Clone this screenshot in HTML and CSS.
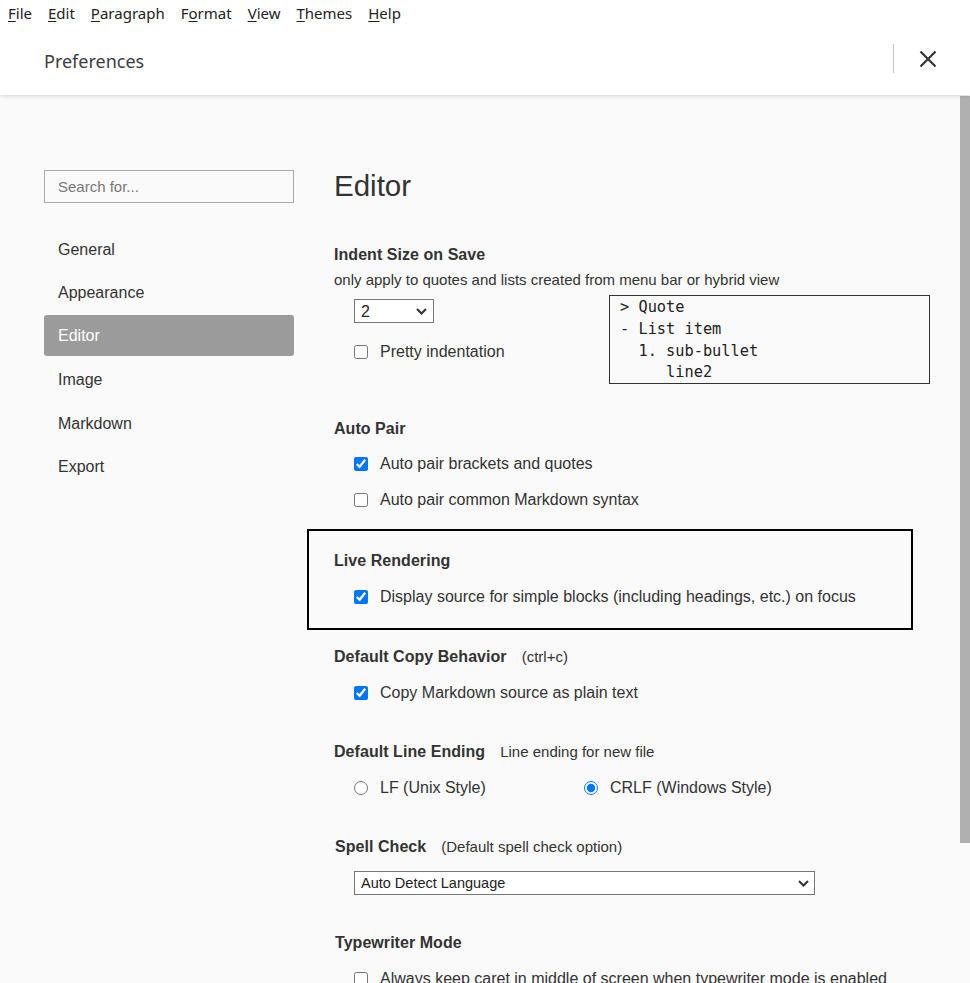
FILE: index.html
```html
<!DOCTYPE html>
<html lang="en">
<head>
<meta charset="utf-8">
<title>Preferences</title>
<link rel="stylesheet" href="styles.css">
</head>
<body>
<header class="top">
  <nav class="menubar">
    <span class="menu"><u>F</u>ile</span>
    <span class="menu"><u>E</u>dit</span>
    <span class="menu"><u>P</u>aragraph</span>
    <span class="menu">F<u>o</u>rmat</span>
    <span class="menu"><u>V</u>iew</span>
    <span class="menu"><u>T</u>hemes</span>
    <span class="menu"><u>H</u>elp</span>
  </nav>
  <div class="titlebar">
    <div class="title">Preferences</div>
    <div class="title-actions">
      <span class="divider"></span>
      <span class="close" aria-label="Close">
        <svg width="18" height="18" viewBox="0 0 18 18"><path d="M1.5 1.5 L16.5 16.5 M16.5 1.5 L1.5 16.5" stroke="#333" stroke-width="2.2" fill="none"/></svg>
      </span>
    </div>
  </div>
</header>
<div class="page">
  <aside class="sidebar">
    <input class="search" type="text" placeholder="Search for...">
    <ul class="nav">
      <li class="nav-item">General</li>
      <li class="nav-item">Appearance</li>
      <li class="nav-item active">Editor</li>
      <li class="nav-item">Image</li>
      <li class="nav-item">Markdown</li>
      <li class="nav-item">Export</li>
    </ul>
  </aside>
  <main class="content">
    <h1 class="page-title">Editor</h1>

    <section class="section section-indent">
      <h2 class="sec-title">Indent Size on Save</h2>
      <div class="desc">only apply to quotes and lists created from menu bar or hybrid view</div>
      <div class="indent-row">
        <div class="indent-left">
          <div class="select-wrap select-small">
            <select class="select"><option>2</option></select>
            <svg class="chev" width="11" height="7" viewBox="0 0 11 7"><path d="M1 1 L5.5 5.5 L10 1" stroke="#333" stroke-width="2" fill="none"/></svg>
          </div>
          <label class="option"><input type="checkbox"><span>Pretty indentation</span></label>
        </div>
        <pre class="code-sample">&gt; Quote
- List item
  1. sub-bullet
     line2</pre>
      </div>
    </section>

    <section class="section section-autopair">
      <h2 class="sec-title">Auto Pair</h2>
      <label class="option first"><input type="checkbox" checked><span>Auto pair brackets and quotes</span></label>
      <label class="option"><input type="checkbox"><span>Auto pair common Markdown syntax</span></label>
    </section>

    <section class="section live-box">
      <h2 class="sec-title">Live Rendering</h2>
      <label class="option"><input type="checkbox" checked><span>Display source for simple blocks (including headings, etc.) on focus</span></label>
    </section>

    <section class="section section-copy">
      <h2 class="sec-title">Default Copy Behavior <span class="sec-note">(ctrl+c)</span></h2>
      <label class="option"><input type="checkbox" checked><span>Copy Markdown source as plain text</span></label>
    </section>

    <section class="section">
      <h2 class="sec-title">Default Line Ending <span class="sec-note">Line ending for new file</span></h2>
      <div class="radio-row">
        <label class="radio-opt"><input type="radio" name="le"><span>LF (Unix Style)</span></label>
        <label class="radio-opt"><input type="radio" name="le" checked><span>CRLF (Windows Style)</span></label>
      </div>
    </section>

    <section class="section">
      <h2 class="sec-title spell">Spell Check <span class="sec-note">(Default spell check option)</span></h2>
      <div class="select-wrap select-wide">
        <select class="select"><option>Auto Detect Language</option></select>
        <svg class="chev" width="11" height="7" viewBox="0 0 11 7"><path d="M1 1 L5.5 5.5 L10 1" stroke="#333" stroke-width="2" fill="none"/></svg>
      </div>
    </section>

    <section class="section section-typewriter">
      <h2 class="sec-title spell">Typewriter Mode</h2>
      <label class="option"><input type="checkbox"><span>Always keep caret in middle of screen when typewriter mode is enabled</span></label>
    </section>
  </main>
  <div class="scroll-thumb"></div>
</div>
</body>
</html>
```

FILE: styles.css
```css
html, body {
  margin: 0;
  padding: 0;
  height: 100%;
  overflow: hidden;
}

body {
  font-family: "Liberation Sans", Arial, sans-serif;
  color: #333;
  background: #fafafa;
}

.top {
  position: relative;
  z-index: 2;
  background: #fff;
  height: 95px;
  box-shadow: 0 1px 4px rgba(0, 0, 0, 0.16);
}

.menubar {
  display: flex;
  height: 27px;
  font-family: "Noto Sans", "Open Sans", sans-serif;
  font-size: 15px;
  line-height: 27px;
  color: #222;
}

.menu {
  padding: 0 8px;
}

.menu u {
  text-underline-offset: 2px;
}

.titlebar {
  display: flex;
  align-items: center;
  justify-content: space-between;
  height: 67px;
  padding-left: 44px;
}

.title {
  font-family: "Noto Sans", "Open Sans", sans-serif;
  font-size: 18px;
  color: #3d3d3d;
}

.title-actions {
  display: flex;
  align-items: center;
  padding-right: 33px;
  margin-bottom: 4px;
}

.divider {
  width: 1px;
  height: 29px;
  background: #c4c4c4;
}

.close {
  display: block;
  width: 18px;
  height: 18px;
  margin-left: 25px;
}

.close svg {
  display: block;
}

.page {
  position: relative;
  display: flex;
  gap: 40px;
  padding: 75px 0 0 44px;
  height: calc(100% - 95px);
  box-sizing: border-box;
  overflow: hidden;
  background: #fafafa;
}

.sidebar {
  width: 250px;
  flex: 0 0 250px;
}

.search {
  display: block;
  width: 250px;
  height: 33px;
  box-sizing: border-box;
  border: 1px solid #ababab;
  background: transparent;
  padding: 0 13px;
  font-family: "Liberation Sans", Arial, sans-serif;
  font-size: 15px;
  color: #333;
  outline: none;
}

.search::placeholder {
  color: #777;
}

.nav {
  list-style: none;
  margin: 25px 0 0;
  padding: 0;
}

.nav-item {
  height: 41px;
  line-height: 43px;
  padding-left: 14px;
  margin-bottom: 2.4px;
  font-size: 16px;
  color: #333;
  border-radius: 3px;
}

.nav-item.active {
  background: #9b9b9b;
  color: #fff;
  line-height: 42px;
}

.content {
  width: 596px;
  flex: 0 0 596px;
}

.page-title {
  margin: 0;
  font-size: 29.5px;
  line-height: 32px;
  font-weight: normal;
  color: #333;
}

.section {
  margin-top: 39px;
}

.section-indent {
  margin-top: 43px;
}

.section-autopair {
  margin-top: 35px;
}

.section-copy {
  margin-top: 17px;
}

.section-typewriter {
  margin-top: 38px;
}

.live-box {
  margin-top: 19px;
  margin-left: -27px;
  width: 606px;
  box-sizing: border-box;
  border: 2px solid #000;
  padding: 20px 0 21px 25px;
}

.sec-title {
  display: flex;
  align-items: baseline;
  margin: 0;
  font-size: 16px;
  line-height: 20px;
  font-weight: bold;
  color: #333;
  letter-spacing: 0.05px;
}

.sec-title.spell {
  padding-left: 1px;
}

.sec-note {
  margin-left: 15px;
  font-size: 15px;
  font-weight: normal;
  letter-spacing: 0;
}

.desc {
  margin-top: 6px;
  font-size: 15px;
  line-height: 18px;
}

.indent-row {
  display: flex;
  justify-content: space-between;
  margin-top: 6px;
}

.indent-left {
  padding: 4px 0 0 20px;
}

.select-wrap {
  position: relative;
}

.select {
  appearance: none;
  -webkit-appearance: none;
  display: block;
  width: 100%;
  height: 24px;
  box-sizing: border-box;
  margin: 0;
  border: 1px solid #777;
  border-radius: 0;
  background: #fff;
  color: #222;
  font-family: "Liberation Sans", Arial, sans-serif;
  outline: none;
}

.chev {
  position: absolute;
  top: 9px;
  right: 6px;
  pointer-events: none;
}

.select-small {
  width: 80px;
}

.select-small .select {
  font-size: 16px;
  padding: 0 0 0 6px;
}

.select-small .chev {
  right: 7px;
}

.select-wide {
  width: 461px;
  margin: 14px 0 0 20px;
}

.select-wide .select {
  font-size: 14.5px;
  padding: 0 0 0 6px;
}

.option {
  display: flex;
  align-items: center;
  height: 20px;
  margin-top: 16px;
  padding-left: 20px;
  font-size: 16px;
  color: #333;
  white-space: nowrap;
}

.option.first {
  margin-top: 15px;
}

.indent-left .option {
  margin-top: 19px;
  padding-left: 0;
}

.option input,
.radio-opt input {
  width: 14px;
  height: 14px;
  margin: 0 12px 0 0;
  flex: 0 0 14px;
}

.code-sample {
  margin: 0;
  width: 321px;
  height: 89px;
  box-sizing: border-box;
  border: 1px solid #333;
  padding: 1px 0 0 10px;
  font-family: "DejaVu Sans Mono", "Liberation Mono", monospace;
  font-size: 15.3px;
  line-height: 21.8px;
  color: #222;
}

.radio-row {
  display: flex;
  margin-top: 16px;
  padding-left: 20px;
}

.radio-opt {
  display: flex;
  align-items: center;
  width: 230px;
  height: 20px;
  font-size: 16px;
  color: #333;
  white-space: nowrap;
}

.scroll-thumb {
  position: absolute;
  top: 1px;
  right: 0;
  width: 10px;
  height: 747px;
  background: #b0b0b0;
}
```
